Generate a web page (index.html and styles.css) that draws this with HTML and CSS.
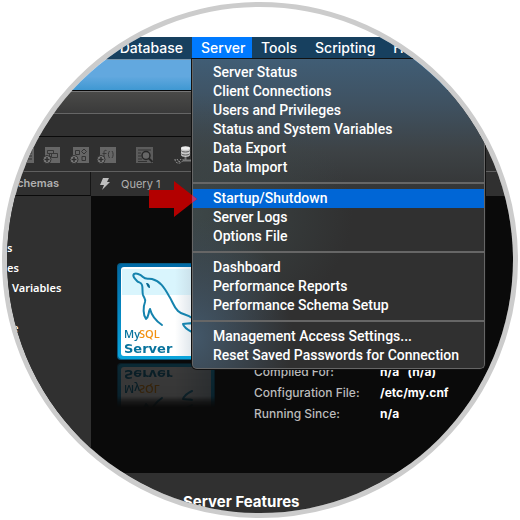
FILE: index.html
```html
<!DOCTYPE html>
<html lang="en">

<head>
    <meta charset="UTF-8">
    <meta name="viewport" content="width=device-width, initial-scale=1.0">
    <title>MySQL Workbench</title>
    <link rel="stylesheet" href="styles.css">
</head>

<body>
    <main class="lens">
        <nav class="menubar">
            <button type="button" class="menu-title first">Database</button>
            <div class="menu">
                <button type="button" class="menu-title open">Server</button>
                <div class="dropdown">
                    <button type="button">Server Status</button>
                    <button type="button">Client Connections</button>
                    <button type="button">Users and Privileges</button>
                    <button type="button">Status and System Variables</button>
                    <button type="button">Data Export</button>
                    <button type="button">Data Import</button>
                    <hr>
                    <button type="button" class="selected">Startup/Shutdown</button>
                    <button type="button">Server Logs</button>
                    <button type="button">Options File</button>
                    <hr>
                    <button type="button">Dashboard</button>
                    <button type="button">Performance Reports</button>
                    <button type="button">Performance Schema Setup</button>
                    <hr>
                    <button type="button">Management Access Settings...</button>
                    <button type="button">Reset Saved Passwords for Connection</button>
                </div>
            </div>
            <button type="button" class="menu-title">Tools</button>
            <button type="button" class="menu-title">Scripting</button>
            <button type="button" class="menu-title">Help</button>
        </nav>

        <div class="desktop"></div>
        <div class="titlebar"></div>
        <div class="connections"></div>

        <div class="toolbar">
            <svg class="tool" viewBox="0 0 20 18">
                <path d="M3 1h16v16H3z" fill="#666"/>
                <path d="M5 4h12M5 7h12M5 10h12M5 13h12" stroke="#333"/>
            </svg>
            <svg class="tool" viewBox="0 0 20 18">
                <path d="M3 1h15v16H3z" fill="#666"/>
                <path d="M5.5 4.5h6v3h-6zM9.500 7.500h6v4h-6zM7.500 7.500v3h2" fill="none" stroke="#383838"/>
                <circle cx="5" cy="13.500" r="4" fill="#7b7b7b" stroke="#303030"/>
                <path d="M5 11v5M2.500 13.500h5" stroke="#303030" stroke-width="1.500"/>
            </svg>
            <svg class="tool" viewBox="0 0 20 18">
                <path d="M4 1h16v16H4z" fill="#666"/>
                <path d="M6.500 4.500h4v4h-4zM13 10.500h3.500v4H13zM15 3l2.500 2.500L15 8l-2.500-2.500z" fill="none" stroke="#353535"/>
                <circle cx="5" cy="13.500" r="4" fill="#7b7b7b" stroke="#303030"/>
                <path d="M5 11v5M2.500 13.500h5" stroke="#303030" stroke-width="1.500"/>
            </svg>
            <svg class="tool" viewBox="0 0 20 18">
                <path d="M4 1h16v16H4z" fill="#666"/>
                <path d="M10.500 4.500c-2-.5-2.500.5-2.500 2V13M6.500 7.500h4M13.500 5c-1.500 2-1.500 5 0 7M16 5c1.500 2 1.500 5 0 7" fill="none" stroke="#383838"/>
                <circle cx="5" cy="13.500" r="4" fill="#7b7b7b" stroke="#303030"/>
                <path d="M5 11v5M2.500 13.500h5" stroke="#303030" stroke-width="1.500"/>
            </svg>
            <svg class="tool search" viewBox="0 0 20 18">
                <path d="M0 1h17v16H0z" fill="#5c5c5c"/>
                <path d="M2 4h13M2 7h3M2 10h3M2 13h4M2 15.500h9" stroke="#333"/>
                <circle cx="10" cy="9.500" r="4" fill="#666" stroke="#262626" stroke-width="1.500"/>
                <path d="M13 12.500l3.500 3.500" stroke="#262626" stroke-width="2"/>
            </svg>
            <svg class="tool database" viewBox="0 0 20 18">
                <path d="M7 2v7c0 2.500 9 2.500 9 0V2z" fill="#c9c9c9"/>
                <ellipse cx="11.500" cy="2" rx="4.500" ry="1.800" fill="#eee"/>
                <path d="M7 4.500c1 2 8 2 9 0M7 7.500c1 2 8 2 9 0" fill="none" stroke="#555"/>
                <path d="M11.500 11v3M9 14.500h11" stroke="#777" stroke-width="2"/>
                <path d="M1 13c0 6 8 5 8 0M3 13l2 3 2-3" fill="none" stroke="#999" stroke-dasharray="2 1"/>
            </svg>
        </div>

        <div class="tabs">
            <div class="tab schemas">Schemas</div>
            <div class="tab query">
                <svg class="bolt" viewBox="0 0 10 12">
                    <path d="M3 0h6L7 4h3L2 12l2-5H0z" fill="#bdbdbd"/>
                </svg>
                Query 1
            </div>
        </div>

        <div class="workspace">
            <ul class="sidebar">
                <li>s</li>
                <li>es</li>
                <li class="inset">Variables</li>
                <li></li>
                <li class="inset">e</li>
            </ul>
            <section class="server">
                <svg class="logo" viewBox="0 0 98 97">
                    <defs>
                        <linearGradient id="frame" x1="0" y1="0" x2="0" y2="1">
                            <stop offset="0" stop-color="#0069a5"/>
                            <stop offset="1" stop-color="#0ba5dc"/>
                        </linearGradient>
                        <linearGradient id="shade">
                            <stop offset=".6" stop-color="#bccbd6" stop-opacity="0"/>
                            <stop offset="1" stop-color="#bccbd6"/>
                        </linearGradient>
                    </defs>
                    <rect width="98" height="97" rx="4" fill="#075b83"/>
                    <rect x="1" y="1" width="96" height="95" rx="4" fill="url(#frame)"/>
                    <rect x="4" y="4" width="90" height="89" rx="3" fill="#fff"/>
                    <path d="M5 6h88v26H5z" fill="#d9f5fd"/>
                    <rect x="4" y="4" width="90" height="89" rx="3" fill="url(#shade)"/>
                    <g fill="none" stroke="#1583ae" stroke-width="2" stroke-linecap="round" stroke-linejoin="round">
                        <path d="M75 55C70 51 65 52 61 48C56 43 56 39 52 33C47 24 43 18 35 16C31 15 29 17 26 14C23 11 19 10 17 11C15 13 18 16 20 18C22 20 24 19 25 22C26 25 25 28 26 32C27 35 29 36 28 39C26 44 26 52 29 56C32 54 31 50 33 46C35 54 39 58 45 62"/>
                        <path d="M75 60C72 61 69 60 66 61C67 65 71 67 75 69"/>
                    </g>
                    <path d="M29 20c3 0 4 2 4 5-2 0-3-2-4-5z" fill="#06668f"/>
                    <text class="logo-my" x="7" y="75">My</text>
                    <text class="logo-my logo-sql" x="22" y="75">SQL</text>
                    <text class="logo-server" x="7" y="90">Server</text>
                </svg>
                <table class="info">
                    <tr>
                        <th>Compiled For:</th>
                        <td>n/a &nbsp; (n/a)</td>
                    </tr>
                    <tr>
                        <th>Configuration File:</th>
                        <td>/etc/my.cnf</td>
                    </tr>
                    <tr>
                        <th>Running Since:</th>
                        <td>n/a</td>
                    </tr>
                </table>
            </section>
        </div>

        <section class="features">
            <h2>Server Features</h2>
        </section>

        <svg class="pointer" viewBox="0 0 48 36">
            <path d="M0 9h25V0l23 18-23 18v-9H0z" fill="#b30000"/>
            <path d="M43 14l5 4-5 4z" fill="#b53570"/>
        </svg>
    </main>
</body>

</html>
```
FILE: styles.css
```css
* {
    box-sizing: border-box;
}
body {
    margin: 2px;
    background: #fff;
    font-family: Inter, "Liberation Sans", sans-serif;
    color: #fff;
}
button {
    border: 0;
    margin: 0;
    background: none;
    color: inherit;
    font: inherit;
    white-space: nowrap;
}
/* round magnifier around the whole window */
.lens {
    position: relative;
    display: flex;
    flex-direction: column;
    aspect-ratio: 1;
    overflow: hidden;
    padding-top: 30px;
    border: 5px solid #ccc;
    border-radius: 50%;
}

/* menu bar */
.menubar {
    display: grid;
    grid-template-columns: 185px 60px auto auto 1fr;
    flex: none;
    height: 22px;
    background: #17405f;
    font-size: 14px;
    font-weight: 500;
}
.menu-title {
    height: 22px;
    padding: 0 9px;
    line-height: 22px;
    text-align: left;
}
.first {
    text-align: right;
}
.menu {
    position: relative;
}
.open {
    width: 100%;
    background: #007aff;
}
.dropdown {
    position: absolute;
    z-index: 2;
    top: 100%;
    left: 0;
    width: 293px;
    padding: 4px 0 3px;
    border: 1px solid #666;
    border-top: 0;
    border-radius: 0 0 5px 5px;
    box-shadow: 0 0 0 1px #111;
    background:
        radial-gradient(ellipse 100px 120px at 0 90%, #43586a, transparent),
        radial-gradient(ellipse 160px 120px at 0 50%, #3d4748, transparent),
        linear-gradient(#405d75, #3f5262 14%, #3d4245 30%, #303030 48%);
    font-family: Roboto, "Liberation Sans", sans-serif;
}
.dropdown button {
    display: block;
    width: 100%;
    height: 19px;
    padding: 0 20px 1px;
    line-height: 18px;
    text-align: left;
}
.dropdown .selected {
    background: #0066d6;
}
.dropdown hr {
    height: 2px;
    margin: 5px 0;
    border: 0;
    background: #666;
}

/* window chrome */
.desktop {
    flex: none;
    height: 32px;
    border-top: 1px solid #7795ad;
    border-bottom: 1px solid #080808;
    background: linear-gradient(#62a8df 55%, #3f98d2);
}
.titlebar {
    flex: none;
    height: 23px;
    border-top: 1px solid #777;
    border-bottom: 1px solid #666;
    background: linear-gradient(#4a4a48, #3a3a3a);
}
.connections {
    flex: none;
    height: 23px;
    border-bottom: 1px solid #0a0a0a;
    background: #303030;
}
.toolbar {
    display: flex;
    flex: none;
    align-items: center;
    gap: 7px;
    height: 35px;
    padding: 2px 0 0 8px;
    border-bottom: 1px solid #606060;
    background: #303030;
}
.tool {
    flex: none;
    width: 20px;
    height: 18px;
}
.search {
    margin-left: 13px;
}
.database {
    margin-left: 11px;
}

.tabs {
    display: flex;
    flex: none;
    height: 24px;
    background: #303030;
    color: #b0b0b0;
    font-size: 11px;
    line-height: 23px;
}
.schemas {
    width: 84px;
    padding-left: 3px;
    border-right: 1px solid #151515;
    border-bottom: 1px solid #0a0a0a;
    font-weight: 600;
}
.query {
    display: flex;
    align-items: center;
    gap: 11px;
    padding-left: 9px;
    font-size: 11px;
}
.bolt {
    width: 10px;
    height: 12px;
}

/* sidebar and server page */
.workspace {
    display: flex;
    flex: none;
    height: 277px;
    background: #0a0a0a;
}
.sidebar {
    flex: none;
    width: 84px;
    margin: 0;
    padding: 42px 0 0;
    background: #303030;
    font: 600 11px/20px "Noto Sans", sans-serif;
    list-style: none;
}
.sidebar li {
    height: 20px;
}
.sidebar .inset {
    padding-left: 5px;
}
.server {
    display: flex;
    align-items: flex-start;
    flex: 1;
    gap: 39px;
    padding: 67px 0 0 26px;
}
.logo {
    flex: none;
    width: 98px;
    height: 97px;
    -webkit-box-reflect: below 3px linear-gradient(transparent 54%, rgba(0, 0, 0, .06) 60%, rgba(0, 0, 0, .18) 66%, rgba(0, 0, 0, .2));
}
.logo-my {
    fill: #08739d;
    font: 600 11px "Open Sans", sans-serif;
}
.logo-sql {
    fill: #f29111;
}
.logo-server {
    fill: #08739d;
    font: bold 13px "DejaVu Sans", sans-serif;
}
.info {
    margin-top: 98px;
    border-spacing: 0;
    font-size: 12px;
    line-height: 21px;
    white-space: nowrap;
}
.info th,
.info td {
    padding: 0;
    text-align: left;
}
.info th {
    width: 126px;
    color: #bbb;
    font-weight: 500;
}
.info td {
    font-weight: 700;
}

.features {
    flex: 1;
    padding-left: 176px;
    background: #303030;
}
.features h2 {
    margin: 19px 0 0;
    font-size: 15px;
    font-weight: 700;
    line-height: 20px;
}

/* red arrow lying over the menu */
.pointer {
    position: absolute;
    z-index: 3;
    top: 174px;
    left: 142px;
    width: 48px;
    height: 36px;
}
```
